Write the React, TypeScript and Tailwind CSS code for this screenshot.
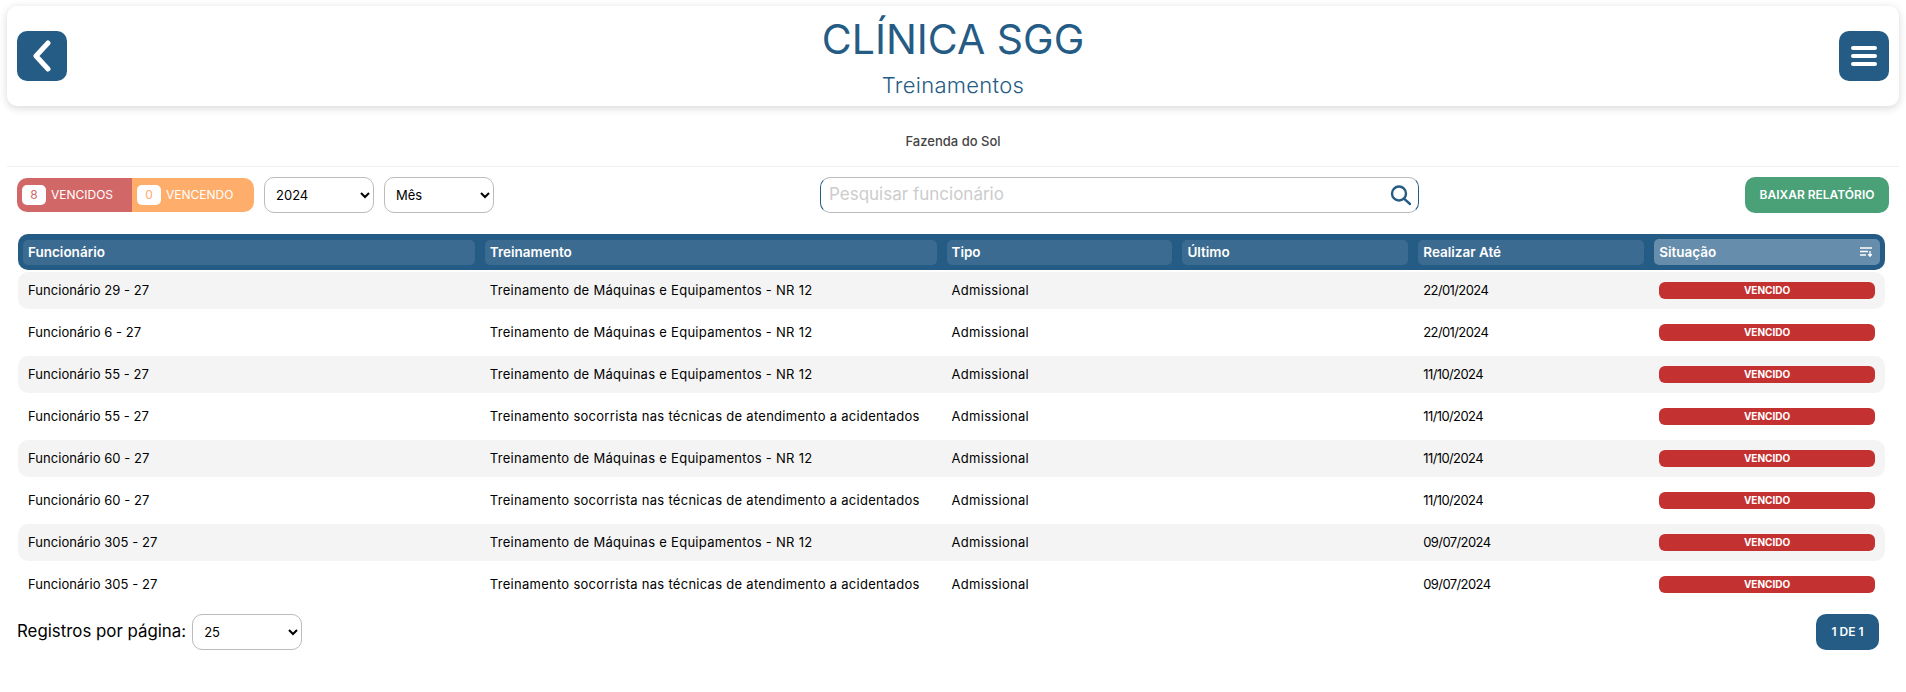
import React from 'react';

const rows = [
  { nome: 'Funcionário 29 - 27', treinamento: 'Treinamento de Máquinas e Equipamentos - NR 12', data: '22/01/2024' },
  { nome: 'Funcionário 6 - 27', treinamento: 'Treinamento de Máquinas e Equipamentos - NR 12', data: '22/01/2024' },
  { nome: 'Funcionário 55 - 27', treinamento: 'Treinamento de Máquinas e Equipamentos - NR 12', data: '11/10/2024' },
  { nome: 'Funcionário 55 - 27', treinamento: 'Treinamento socorrista nas técnicas de atendimento a acidentados', data: '11/10/2024' },
  { nome: 'Funcionário 60 - 27', treinamento: 'Treinamento de Máquinas e Equipamentos - NR 12', data: '11/10/2024' },
  { nome: 'Funcionário 60 - 27', treinamento: 'Treinamento socorrista nas técnicas de atendimento a acidentados', data: '11/10/2024' },
  { nome: 'Funcionário 305 - 27', treinamento: 'Treinamento de Máquinas e Equipamentos - NR 12', data: '09/07/2024' },
  { nome: 'Funcionário 305 - 27', treinamento: 'Treinamento socorrista nas técnicas de atendimento a acidentados', data: '09/07/2024' },
];

const headers = ['Funcionário', 'Treinamento', 'Tipo', 'Último', 'Realizar Até'];

const App: React.FC = () => {
  return (
    <div className="min-h-[692px] bg-white pt-[6px] font-['Inter',sans-serif] text-black">
      <header className="mx-[7px] flex h-[100px] items-center justify-between rounded-[10px] bg-white px-[10px] shadow-[0_2px_8px_rgba(0,0,0,0.16)]">
        <button className="flex h-[50px] w-[50px] items-center justify-center rounded-[10px] bg-[#255c85]">
          <svg width="22" height="32" viewBox="0 0 22 32" fill="none" stroke="#fff" strokeWidth="5" strokeLinecap="round" strokeLinejoin="round">
            <path d="M17 3 L5 16 L17 29" />
          </svg>
        </button>
        <div className="flex flex-col items-center">
          <h1 className="mt-[-1px] text-[41px] leading-[50px] font-normal text-[#255c85]">CLÍNICA SGG</h1>
          <h2 className="mt-[8px] text-[22px] leading-[26px] font-light tracking-[0.3px] text-[#255c85]">Treinamentos</h2>
        </div>
        <button className="flex h-[50px] w-[50px] items-center justify-center rounded-[10px] bg-[#255c85]">
          <svg width="26" height="20" viewBox="0 0 26 20" stroke="#fff" strokeWidth="4" strokeLinecap="round">
            <path d="M2 2 H24 M2 10 H24 M2 18 H24" />
          </svg>
        </button>
      </header>

      <div className="mx-[7px] flex h-[61px] items-center justify-center border-b border-[#f0f0f0] pt-[12px] text-[13px] font-medium text-[#444]">
        Fazenda do Sol
      </div>

      <div className="mt-[10px] flex h-[36px] items-center justify-between px-[17px]">
        <div className="flex w-[477px] items-center gap-[10px]">
          <div className="flex h-[34px] text-[12px] text-white">
            <div className="flex w-[115px] items-center gap-[5px] rounded-l-[10px] bg-[#d26767] pl-[5px]">
              <span className="flex h-[20px] w-[24px] items-center justify-center rounded-[5px] bg-white text-[#d26767]">8</span>
              VENCIDOS
            </div>
            <div className="flex w-[122px] items-center gap-[5px] rounded-r-[10px] bg-[#ffad6b] pl-[5px]">
              <span className="flex h-[20px] w-[24px] items-center justify-center rounded-[5px] bg-white text-[#ffad6b]">0</span>
              VENCENDO
            </div>
          </div>
          <select className="h-[36px] w-[110px] rounded-[10px] border border-[#bbb] bg-white pl-[7px] text-[13px]">
            <option>2024</option>
          </select>
          <select className="h-[36px] w-[110px] rounded-[10px] border border-[#bbb] bg-white pl-[7px] text-[13px]">
            <option>Mês</option>
          </select>
        </div>
        <div className="flex h-[36px] w-[599px] items-center rounded-[10px] border border-[#bbb] border-x-[#255c85] pr-[7px] pl-[8px]">
          <input
            placeholder="Pesquisar funcionário"
            className="min-w-0 flex-1 bg-transparent text-[17px] outline-none placeholder:text-[#ccc]"
          />
          <svg width="22" height="22" viewBox="0 0 22 22" fill="none" stroke="#255c85" strokeWidth="2.4" strokeLinecap="round">
            <circle cx="10" cy="9.5" r="7" />
            <path d="M15.3 14.8 L21 20" />
          </svg>
        </div>
        <button className="h-[36px] w-[144px] rounded-[10px] bg-[#4aa077] text-[12px] font-semibold text-white">
          BAIXAR RELATÓRIO
        </button>
      </div>

      <div className="mt-[21px] pr-[21px] pl-[18px]">
        <div className="grid h-[36px] grid-cols-[2fr_2fr_1fr_1fr_1fr_1fr] items-center gap-x-[10px] rounded-[10px] bg-[#255c85] px-[5px] text-[13.5px] font-semibold text-white">
          {headers.map((h) => (
            <div key={h} className="flex h-[25px] items-center rounded-[5px] bg-[#3b6b91] px-[5px]">
              {h}
            </div>
          ))}
          <div className="flex h-[26px] items-center justify-between rounded-[5px] bg-[#668dab] pr-[7px] pl-[5px]">
            Situação
            <svg width="13" height="10" viewBox="0 0 13 10" fill="none" stroke="#fff" strokeWidth="1.3">
              <path d="M0 1 H12 M0 4.5 H8 M0 8 H6 M10 4 V9 M8.2 7.2 L10 9.2 L11.8 7.2" />
            </svg>
          </div>
        </div>
        <div className="mt-[2px] flex flex-col gap-[5px]">
          {rows.map((r, i) => (
            <div
              key={i}
              className={`grid h-[37px] grid-cols-[2fr_2fr_1fr_1fr_1fr_1fr] items-center gap-x-[10px] rounded-[10px] px-[5px] text-[13px] ${i % 2 === 0 ? 'bg-[#f4f4f4]' : 'bg-white'}`}
            >
              <div className="px-[5px] tracking-[0.05px]">{r.nome}</div>
              <div className="px-[5px] tracking-[0.28px]">{r.treinamento}</div>
              <div className="px-[5px] tracking-[0.3px]">Admissional</div>
              <div />
              <div className="px-[5px] tracking-[-0.6px]">{r.data}</div>
              <div className="px-[5px]">
                <div className="flex h-[17px] items-center justify-center rounded-[6px] bg-[#c43131] text-[10px] font-bold text-white">VENCIDO</div>
              </div>
            </div>
          ))}
        </div>
      </div>

      <div className="mt-[11px] flex items-center justify-between pr-[27px] pl-[17px]">
        <div className="flex items-center gap-[6px] text-[16.85px]">
          Registros por página:
          <select className="h-[36px] w-[110px] rounded-[10px] border border-[#bbb] bg-white pl-[7px] text-[13px]">
            <option>25</option>
          </select>
        </div>
        <button className="h-[36px] w-[63px] rounded-[10px] bg-[#255c85] text-[12px] font-semibold text-white">1 DE 1</button>
      </div>
    </div>
  );
};

export default App;
